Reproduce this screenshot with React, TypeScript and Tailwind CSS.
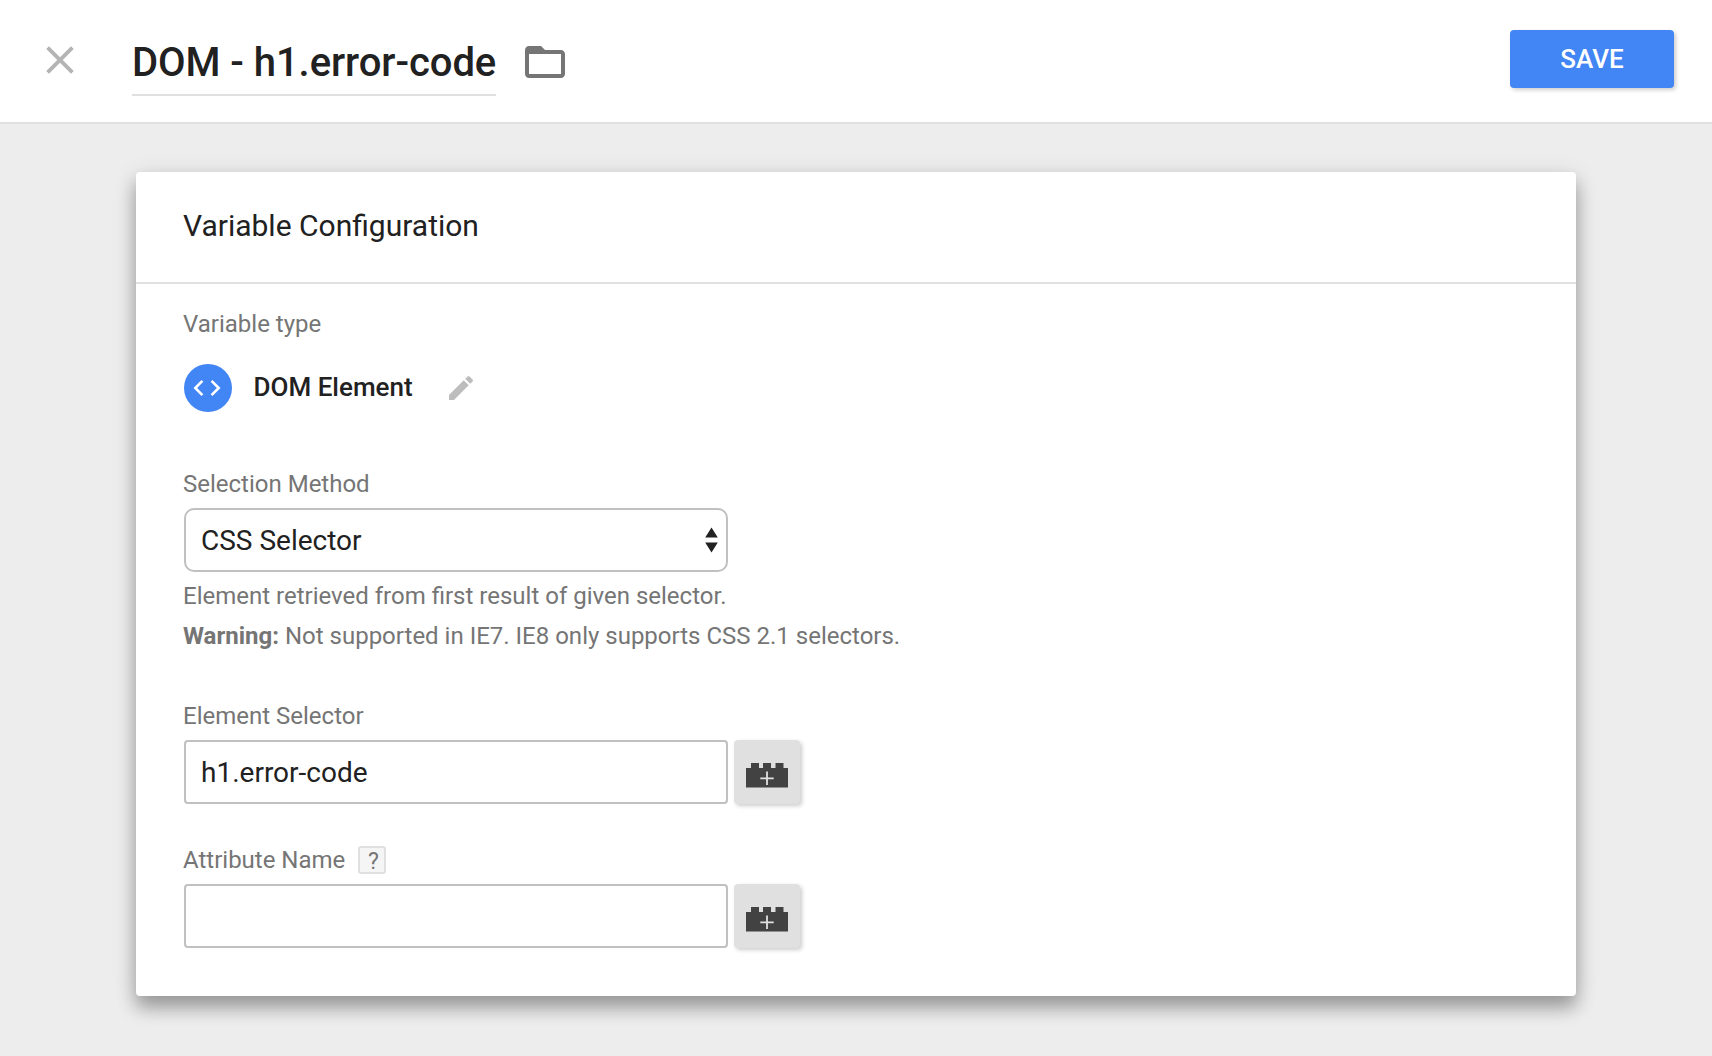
import type { ReactNode } from "react";

function CloseIcon() {
  return (
    <svg className="size-7" viewBox="0 0 28 28" fill="none" stroke="#b4b4b4" strokeWidth="3.9">
      <path d="M1.6 1.6 26.4 26.4M26.4 1.6 1.6 26.4" />
    </svg>
  );
}

function FolderIcon() {
  return (
    <svg className="size-12" viewBox="0 0 24 24" fill="#757575">
      <path d="M20 6h-8l-2-2H4c-1.1 0-1.99.9-1.99 2L2 18c0 1.1.9 2 2 2h16c1.1 0 2-.9 2-2V8c0-1.1-.9-2-2-2zm0 12H4V8h16v10z" />
    </svg>
  );
}

function CodeIcon() {
  return (
    <svg className="size-12" viewBox="0 0 48 48" fill="none" stroke="#fff" strokeWidth="2.6">
      <path d="M18.4 16.9 11.3 24l7.1 7.1M27.6 16.9l7.1 7.1-7.1 7.1" />
    </svg>
  );
}

function PencilIcon() {
  return (
    <svg className="size-8" viewBox="0 0 24 24" fill="#bdbdbd">
      <path d="M3 17.25V21h3.75L17.81 9.94l-3.75-3.75L3 17.25zM20.71 7.04a1 1 0 0 0 0-1.41l-2.34-2.34a1 1 0 0 0-1.41 0l-1.83 1.83 3.75 3.75 1.83-1.83z" />
    </svg>
  );
}

function BrickIcon() {
  return (
    <svg className="h-[25px] w-[42px]" viewBox="0 0 42 25">
      <path fill="#424242" d="M0 5h5V0h8v5h4V0h8v5h4.500V0h8v5H42v19.500H0z" />
      <path stroke="#e0e0e0" strokeWidth="1.8" d="M14.300 15.300h13.400M21 8.600v13.400" />
    </svg>
  );
}

function Label({ children }: { children: ReactNode }) {
  return <div className="-ml-px flex h-10 items-center text-2xl leading-10 text-[#757575]">{children}</div>;
}

function VariableField({ value }: { value: string }) {
  return (
    <div className="mt-1 flex gap-1.5">
      <div className="h-16 w-[544px] rounded border-2 border-[#c0c0c0] bg-white pl-[15px] pr-4 text-[28px] leading-[62px] text-[#212121]">
        {value}
      </div>
      <button className="flex h-16 w-[66px] items-center rounded bg-[#e0e0e0] pl-[12.4px] pt-1.5 shadow-[2px_2px_4px_rgba(0,0,0,0.2)]">
        <BrickIcon />
      </button>
    </div>
  );
}

export default function App() {
  return (
    <div className="flex h-[1056px] w-[1712px] flex-col overflow-hidden bg-[#ededed] font-['Roboto',sans-serif] text-[#212121]">
      <header className="flex h-[124px] shrink-0 items-start border-b-2 border-[#e0e0e0] bg-white pl-[46px] pr-[38px]">
        <button className="mt-[46px]">
          <CloseIcon />
        </button>
        <h1 className="ml-[58px] mt-[38px] h-[58px] w-[364px] whitespace-nowrap border-b-2 border-[#e0e0e0] text-[40px] font-medium leading-[50px] tracking-[-0.06px]">
          DOM - h1.error-code
        </h1>
        <button className="ml-[24.5px] mt-[38px]">
          <FolderIcon />
        </button>
        <button className="ml-auto mt-[30px] h-[58px] w-[164px] rounded bg-[#4285f4] text-[26px] font-medium leading-[58px] text-white shadow-[2px_2px_4px_rgba(0,0,0,0.2)]">
          SAVE
        </button>
      </header>

      <main className="mx-[136px] mt-12 h-[824px] rounded bg-white shadow-[0_12px_18px_rgba(0,0,0,0.3),0_4px_24px_rgba(0,0,0,0.12)]">
        <h2 className="h-28 border-b-2 border-[#e0e0e0] pl-[47px] text-[30px] leading-[108px]">Variable Configuration</h2>
        <div className="px-12 pt-5">
          <Label>Variable type</Label>
          <div className="mt-5 flex h-12 items-center">
            <span className="size-12 rounded-full bg-[#4285f4]">
              <CodeIcon />
            </span>
            <span className="ml-[21.6px] pb-0.5 text-[26px] font-medium leading-[46px]">DOM Element</span>
            <button className="ml-8">
              <PencilIcon />
            </button>
          </div>

          <div className="mt-[52px]">
            <Label>Selection Method</Label>
            <div className="mt-1 flex h-16 w-[544px] items-center justify-between rounded-[10px] border-2 border-[#c0c0c0] pl-[15px] pr-2 text-[28px] leading-[60px]">
              <span className="pt-0.5">CSS Selector</span>
              <svg className="h-[26px] w-[13px]" viewBox="0 0 13 26" fill="#212121">
                <path d="M6.500 0.500l6.300 10H0.200zM0.200 15.500h12.600L6.500 25.500z" />
              </svg>
            </div>
            <p className="-ml-px mt-1 text-2xl leading-10 text-[#757575]">
              Element retrieved from first result of given selector.
              <br />
              <b className="font-bold">Warning:</b> Not supported in IE7. IE8 only supports CSS 2.1 selectors.
            </p>
          </div>

          <div className="mt-10">
            <Label>Element Selector</Label>
            <VariableField value="h1.error-code" />
          </div>

          <div className="mt-9">
            <Label>
              Attribute Name
              <span className="ml-[13px] size-7 rounded-[3px] border-2 border-[#e0e0e0] bg-[#f5f5f5] pl-0.5 text-center text-[23px] leading-[27px]">
                ?
              </span>
            </Label>
            <VariableField value="" />
          </div>
        </div>
      </main>
    </div>
  );
}
